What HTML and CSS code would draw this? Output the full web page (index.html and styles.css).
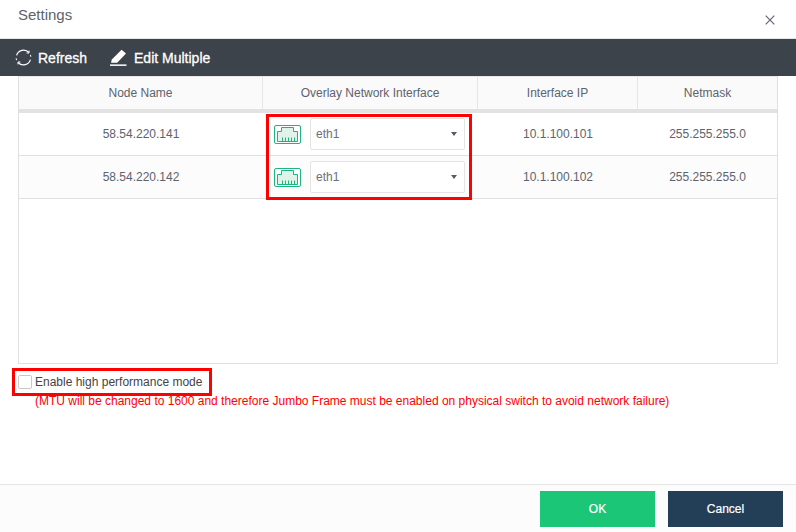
FILE: index.html
```html
<!DOCTYPE html>
<html lang="en">
<head>
<meta charset="utf-8">
<title>Settings</title>
<link rel="stylesheet" href="styles.css">
</head>
<body>
<div class="dialog">
  <header class="head">
    <h1 class="title">Settings</h1>
    <svg class="close" width="10" height="10" viewBox="0 0 10 10"><path d="M.7.7l8.6 8.6M9.3.7L.7 9.3" stroke="#5f6670" stroke-width="1.2" fill="none"/></svg>
  </header>
  <div class="toolbar">
    <span class="tool tool-refresh">
      <svg width="17" height="17" viewBox="0 0 17 17" fill="none" stroke="#fff" stroke-width="1.2"><path d="M1.6 6.4A7.2 7.2 0 0 1 13.8 3.4"/><path d="M15.4 10.6A7.2 7.2 0 0 1 3.2 13.6"/><path d="M1.1 9.2l.5 2M15.9 7.8l-.5-2" stroke-width="1"/><path d="M14 1.6v2.4h-2.4M3 15.4V13h2.4" stroke-width="1"/></svg>
      Refresh
    </span>
    <span class="tool tool-edit">
      <svg width="17" height="17" viewBox="0 0 17 17" fill="#fff"><path d="M11.6 .8l4.4 3.6-8.8 9.4H1l.8-3.4z"/><rect x="0" y="15.4" width="16.5" height="1.5"/></svg>
      Edit Multiple
    </span>
  </div>
  <main class="content">
    <div class="table">
      <div class="row row-head">
        <div class="cell">Node Name</div>
        <div class="cell">Overlay Network Interface</div>
        <div class="cell">Interface IP</div>
        <div class="cell">Netmask</div>
      </div>
      <div class="row row-body">
        <div class="cell">58.54.220.141</div>
        <div class="cell cell-if">
          <svg class="port" width="27" height="19" viewBox="0 0 27 19"><rect x=".5" y=".5" width="26" height="18" rx="1.5" fill="#fff" stroke="#1fb57f"/><path d="M3.5 16.5v-10h4v-4h12v4h4v10z" fill="#dff3ea" stroke="#1fb57f"/><path d="M8.500 16v-3.500M11.500 16v-3.500M14.500 16v-3.500M17.500 16v-3.500M20.500 16v-3.500" stroke="#1fb57f"/></svg>
          <div class="select"><span>eth1</span><i class="caret"></i></div>
        </div>
        <div class="cell">10.1.100.101</div>
        <div class="cell">255.255.255.0</div>
      </div>
      <div class="row row-body">
        <div class="cell">58.54.220.142</div>
        <div class="cell cell-if">
          <svg class="port" width="27" height="19" viewBox="0 0 27 19"><rect x=".5" y=".5" width="26" height="18" rx="1.5" fill="#fff" stroke="#1fb57f"/><path d="M3.5 16.5v-10h4v-4h12v4h4v10z" fill="#dff3ea" stroke="#1fb57f"/><path d="M8.500 16v-3.500M11.500 16v-3.500M14.500 16v-3.500M17.500 16v-3.500M20.500 16v-3.500" stroke="#1fb57f"/></svg>
          <div class="select"><span>eth1</span><i class="caret"></i></div>
        </div>
        <div class="cell">10.1.100.102</div>
        <div class="cell">255.255.255.0</div>
      </div>
      <div class="mark mark-if"></div>
    </div>
    <div class="option">
      <label class="check"><span class="box"></span>Enable high performance mode</label>
      <p class="warn">(MTU will be changed to 1600 and therefore Jumbo Frame must be enabled on physical switch to avoid network failure)</p>
      <div class="mark mark-check"></div>
    </div>
  </main>
  <footer class="foot">
    <button class="btn btn-ok">OK</button>
    <button class="btn btn-cancel">Cancel</button>
  </footer>
</div>
</body>
</html>
```
FILE: styles.css
```css
* { box-sizing: border-box; }
html, body { margin: 0; padding: 0; }
body { font-family: "Liberation Sans", Arial, sans-serif; background: #fff; color: #555b66; width: 796px; height: 532px; overflow: hidden; }
.dialog { display: flex; flex-direction: column; height: 532px; }
.head { height: 39px; padding: 6px 21px 0 18px; display: flex; justify-content: space-between; border-bottom: 1px solid #e5e5e5; flex: none; }
.title { margin: 0; font-size: 15px; line-height: 18px; font-weight: 400; color: #5d636e; }
.close { margin-top: 8.500px; }
.toolbar { height: 37px; background: #3c434a; display: flex; align-items: center; padding-left: 15px; color: #fff; font-size: 14px; font-weight: 400; flex: none; }
.tool { display: inline-flex; align-items: center; -webkit-text-stroke: .3px #fff; }
.tool-refresh { gap: 6px; }
.tool-edit { gap: 7px; margin-left: 23px; }
.content { flex: 1; padding: 0 18px; }
.table { position: relative; height: 288px; border: 1px solid #e0e0e0; border-top: 0; font-size: 12px; }
.row { display: grid; grid-template-columns: 244px 215px 160px 1fr; }
.row-head { height: 37px; background: #fafafa; border-top: 1px solid #e6e6e6; border-bottom: 4px solid #e2e2e2; color: #5d636e; }
.row-head .cell { border-right: 1px solid #e6e6e6; }
.row-head .cell:last-child { border-right: 0; }
.row-body { height: 43px; border-bottom: 1px solid #e0e0e0; color: #5d636e; }
.row-body:nth-child(3) { background: #fcfcfc; }
.cell { display: flex; align-items: center; justify-content: center; }
.cell-if { justify-content: flex-start; padding-left: 11px; gap: 9px; }
.port { flex: none; }
.select { width: 155px; height: 32px; border: 1px solid #e4e4e4; border-radius: 2px; background: #fff; display: flex; align-items: center; justify-content: space-between; padding: 0 7px 0 5px; color: #6a707a; }
.caret { width: 0; height: 0; border-left: 3.500px solid transparent; border-right: 3.500px solid transparent; border-top: 4px solid #555b66; }
.mark { position: absolute; border: 3px solid #f00; pointer-events: none; }
.mark-if { left: 247px; top: 38px; width: 206px; height: 86px; }
.option { position: relative; padding: 11px 0 0; font-size: 12px; }
.check { display: flex; align-items: center; gap: 3px; height: 14px; color: #444; }
.box { width: 14px; height: 14px; border: 1px solid #c8c8c8; border-radius: 2px; background: #fff; }
.warn { margin: 5px 0 0 17px; color: #f00; line-height: 14px; font-size: 12px; }
.mark-check { left: -6px; top: 4px; width: 200px; height: 28px; }
.foot { height: 48px; flex: none; background: #fcfcfc; border-top: 1px solid #e4e4e4; display: flex; justify-content: flex-end; gap: 13px; padding: 6px 13px 0 0; }
.btn { width: 115px; height: 36px; border: 0; color: #fff; font: 12px "Liberation Sans", Arial, sans-serif; font-weight: 400; -webkit-text-stroke: .2px #fff; }
.btn-ok { background: #1cc677; }
.btn-cancel { background: #233f57; }
```
